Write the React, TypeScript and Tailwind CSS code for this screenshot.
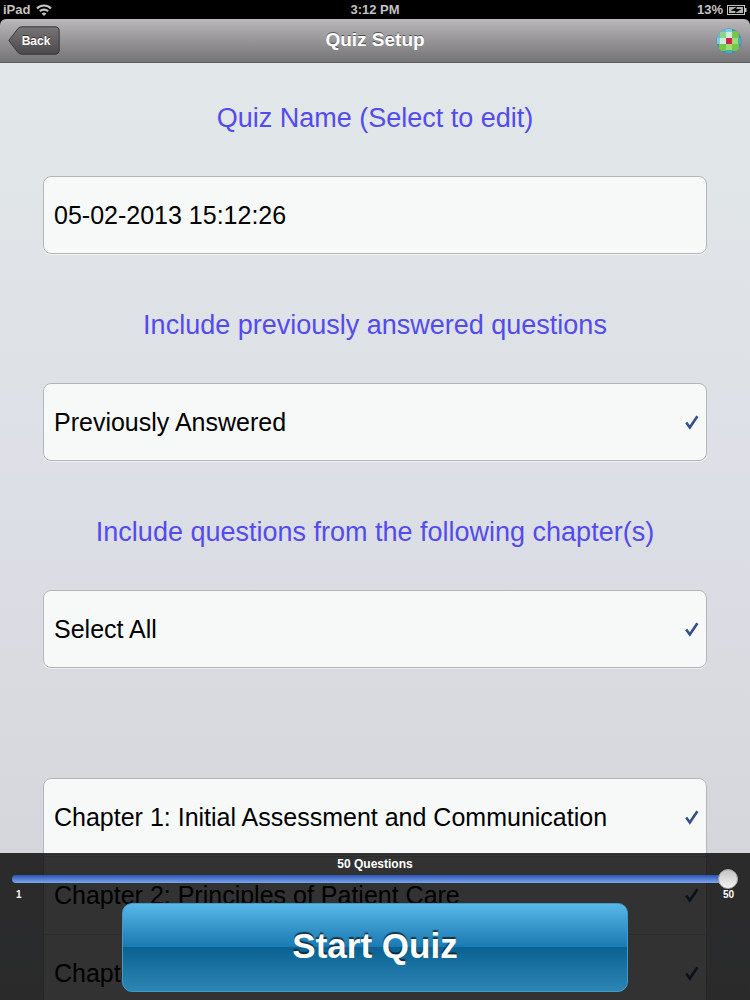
import React, { useState } from 'react';

const chapters = [
  'Chapter 1: Initial Assessment and Communication',
  'Chapter 2: Principles of Patient Care',
  'Chapter 3',
];

function WifiIcon() {
  return (
    <svg width="16" height="12" viewBox="0 0 16 12" fill="none" stroke="#c4c4c4" strokeWidth="2.1" aria-hidden="true">
      <path d="M1 4.4a10 10 0 0 1 14 0" />
      <path d="M3.8 7.3a6 6 0 0 1 8.4 0" />
      <path d="M8 12 5.6 9.6a3.4 3.4 0 0 1 4.8 0z" fill="#c4c4c4" stroke="none" />
    </svg>
  );
}

function BatteryIcon() {
  return (
    <svg width="20" height="10" viewBox="0 0 20 10" aria-hidden="true">
      <rect x="0.5" y="0.5" width="17" height="9" fill="none" stroke="#c4c4c4" />
      <rect x="2" y="2" width="14" height="6" fill="#b0b0b0" />
      <path d="M18 3h1.5v4H18z" fill="#c4c4c4" />
      <path d="M3.5 5.8 10 1.8 9.4 4h5.1L8 8.2 8.6 6z" fill="#000" />
    </svg>
  );
}

function GlobeIcon() {
  return (
    <svg width="26" height="26" viewBox="0 0 26 26" aria-hidden="true">
      <clipPath id="globe">
        <circle cx="13" cy="13" r="12.5" />
      </clipPath>
      <g clipPath="url(#globe)">
        <rect width="26" height="26" fill="#3591c0" />
        <rect x="3" y="3" width="20" height="20" fill="#74c846" />
        <path d="M4 1h6v3H4zM1 4h3v6H1z" fill="#66bcd2" />
        <path d="M10 1h6v3h-6zM1 10h3v6H1z" fill="#7fcbe0" />
        <path d="M22 10h3v6h-3zM10 22h6v3h-6z" fill="#4fa8bd" />
        <path d="M4 4h6v6H4z" fill="#8dd38c" />
        <path d="M10 4h6v6h-6zM4 10h6v6H4z" fill="#cdeedd" />
        <path d="M10 16h6v6h-6zM16 10h6v6h-6z" fill="#9bdc76" />
        <rect x="10" y="10" width="6" height="6" fill="#d51f4a" />
      </g>
    </svg>
  );
}

type CheckRowProps = {
  label: string;
  checked: boolean;
  onChange: () => void;
};

function CheckRow({ label, checked, onChange }: CheckRowProps) {
  return (
    <label className="flex h-[78px] items-center justify-between pl-2.5 pr-1.5 text-[25px] text-black">
      {label}
      <span className="grid size-4 place-items-center">
        <input
          type="checkbox"
          className="peer col-start-1 row-start-1 size-4 appearance-none"
          checked={checked}
          onChange={onChange}
        />
        <svg
          className="invisible col-start-1 row-start-1 peer-checked:visible"
          width="14"
          height="16"
          viewBox="0 0 14 16"
          fill="none"
          stroke="#34508b"
          strokeWidth="2.6"
          aria-hidden="true"
        >
          <path d="M1.2 7.5 4.8 12.5 12.4 1.2" />
        </svg>
      </span>
    </label>
  );
}

function Heading({ children }: { children: React.ReactNode }) {
  return (
    <h2 className="flex h-[113px] items-center justify-center pb-0.5 text-[27px] text-[#534bf0]">
      {children}
    </h2>
  );
}

const card = 'rounded-lg border border-[#b4b7ba] bg-[#f7f9f9] shadow-[0_1px_0_#ffffff80]';

export default function App() {
  const [name, setName] = useState('05-02-2013 15:12:26');
  const [previous, setPrevious] = useState(true);
  const [selected, setSelected] = useState(chapters.map(() => true));
  const [count, setCount] = useState(50);

  const allSelected = selected.every(Boolean);

  const toggleChapter = (index: number) => {
    setSelected(selected.map((value, i) => (i === index ? !value : value)));
  };

  return (
    <div className="relative flex h-screen flex-col overflow-hidden bg-black font-['Liberation_Sans',Arial,sans-serif]">
      <div className="grid h-[19px] shrink-0 grid-cols-3 items-center px-[3px] text-[13px] font-bold text-[#c4c4c4]">
        <div className="flex items-center gap-1.5">
          <span>iPad</span>
          <WifiIcon />
        </div>
        <div className="text-center">3:12 PM</div>
        <div className="flex items-center justify-end gap-1">
          <span>13%</span>
          <BatteryIcon />
        </div>
      </div>

      <header className="grid h-11 shrink-0 grid-cols-3 items-center rounded-t-md border-b border-[#5c5c5e] bg-linear-to-b from-[#bab8ba] to-[#747375] px-2">
        <button type="button" className="relative h-[29px] w-[52px] justify-self-start pl-1 text-[12px] font-bold text-white [text-shadow:0_-1px_0_#00000080]">
          <svg className="absolute inset-0" width="52" height="29" viewBox="0 0 52 29" aria-hidden="true">
            <defs>
              <linearGradient id="back" x1="0" y1="0" x2="0" y2="1">
                <stop offset="0" stopColor="#777577" />
                <stop offset="1" stopColor="#4b494b" />
              </linearGradient>
            </defs>
            <path
              d="M.8 14.5 10 2.5Q11.5.8 14 .8H47Q51.2.8 51.2 5V24Q51.2 28.2 47 28.2H14Q11.5 28.2 10 26.5Z"
              fill="url(#back)"
              stroke="#39373a"
            />
          </svg>
          <span className="relative">Back</span>
        </button>
        <h1 className="text-center text-[19px] font-bold text-white [text-shadow:0_-1px_0_#00000080]">Quiz Setup</h1>
        <button type="button" aria-label="Language" className="justify-self-end">
          <GlobeIcon />
        </button>
      </header>

      <main className="flex-1 overflow-y-auto bg-linear-to-b from-[#e2e8e9] via-[#dcdee5] to-[#d2d3d7] px-[43px] [scrollbar-width:none]">
        <section className="mb-4">
          <Heading>
            <label htmlFor="quiz-name">Quiz Name (Select to edit)</label>
          </Heading>
          <input
            id="quiz-name"
            className={`${card} block h-[78px] w-full px-2.5 text-[25px] text-black outline-none`}
            value={name}
            onChange={(e) => setName(e.target.value)}
          />
        </section>

        <section className="mb-4">
          <Heading>Include previously answered questions</Heading>
          <div className={`${card} h-[78px]`}>
            <CheckRow label="Previously Answered" checked={previous} onChange={() => setPrevious(!previous)} />
          </div>
        </section>

        <section>
          <Heading>Include questions from the following chapter(s)</Heading>
          <div className={`${card} mb-[110px] h-[78px]`}>
            <CheckRow
              label="Select All"
              checked={allSelected}
              onChange={() => setSelected(chapters.map(() => !allSelected))}
            />
          </div>
          <div className={`${card} divide-y divide-[#dcdddd]`}>
            {chapters.map((chapter, i) => (
              <CheckRow key={chapter} label={chapter} checked={selected[i]} onChange={() => toggleChapter(i)} />
            ))}
          </div>
        </section>
      </main>

      {/* Overlay bar with the question count and start button */}
      <footer className="absolute inset-x-0 bottom-0 flex h-[147px] flex-col items-center bg-black/80 px-3 pb-2 text-white">
        <label htmlFor="count" className="h-[22px] text-[12px] font-bold leading-[22px]">
          {count} Questions
        </label>
        <input
          id="count"
          type="range"
          min={1}
          max={50}
          value={count}
          onChange={(e) => setCount(Number(e.target.value))}
          className="h-2 w-full appearance-none rounded-full bg-linear-to-b from-[#2d55b0] to-[#7ba6f0] [&::-webkit-slider-thumb]:size-5 [&::-webkit-slider-thumb]:appearance-none [&::-webkit-slider-thumb]:rounded-full [&::-webkit-slider-thumb]:border [&::-webkit-slider-thumb]:border-[#a5a5a5] [&::-webkit-slider-thumb]:bg-linear-to-b [&::-webkit-slider-thumb]:from-[#c4c4c4] [&::-webkit-slider-thumb]:to-[#f4f4f4]"
        />
        <div className="flex h-5 w-full justify-between px-1 pt-1 text-[10px] font-bold leading-4">
          <span>1</span>
          <span>50</span>
        </div>
        <button
          type="button"
          className="h-[89px] w-[506px] max-w-full rounded-[10px] border border-[#3c9ccb] bg-[linear-gradient(#58b8e8,#1a7ab2_49%,#0a6292_50%,#2c86b3)] pb-0.5 text-[35px] font-bold text-white [text-shadow:0_-2px_1px_#00000099]"
        >
          Start Quiz
        </button>
      </footer>
    </div>
  );
}
